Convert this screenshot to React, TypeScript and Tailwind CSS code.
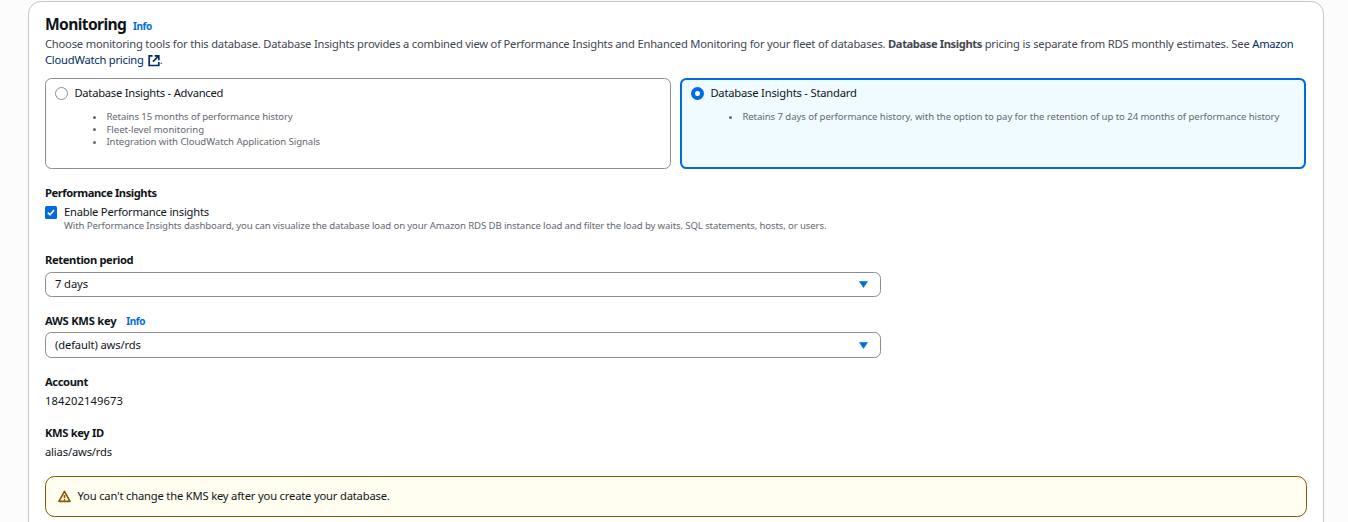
import type { ReactNode } from "react";

function Info({ className = "" }: { className?: string }) {
  return (
    <a className={`text-[10px] font-bold tracking-[-0.4px] text-[#006ce0] ${className}`} href="#info">
      Info
    </a>
  );
}

function ExternalIcon() {
  return (
    <svg
      className="ml-[4px] inline-block h-[13px] w-3 align-[-3px]"
      viewBox="0 0 12 13"
      fill="none"
      stroke="currentColor"
      strokeWidth="1.7"
    >
      <path d="M4.6 1.8H1.2v9.7h9.6V8" />
      <path d="M6.6 1.8h4.2v4.4M10.6 2 5 7.6" />
    </svg>
  );
}

function WarningIcon() {
  return (
    <svg
      className="h-[13px] w-[13px] shrink-0"
      viewBox="0 0 16 16"
      fill="none"
      stroke="#855900"
      strokeWidth="2"
      strokeLinejoin="round"
    >
      <path d="M8 1.6 1.2 14h13.6L8 1.6Z" />
      <path d="M8 6v4M8 11v2" />
    </svg>
  );
}

function Radio({ checked }: { checked: boolean }) {
  return (
    <svg className="h-[13px] w-[13px] shrink-0" viewBox="0 0 13 13">
      {checked ? (
        <circle cx="6.5" cy="6.5" r="4.5" fill="#fff" stroke="#006ce0" strokeWidth="4" />
      ) : (
        <circle cx="6.5" cy="6.5" r="6" fill="#fff" stroke="#8c8c94" strokeWidth="1" />
      )}
    </svg>
  );
}

function Tile({ title, items, checked }: { title: ReactNode; items: ReactNode[]; checked: boolean }) {
  const frame = checked
    ? "border-2 border-[#006ce0] bg-[#f0fbff] px-[9px] py-[5px]"
    : "border border-[#8c8c94] bg-white px-[9px] py-[6px]";
  return (
    <div className={`h-[91px] w-[626px] rounded-[6.4px] ${frame}`}>
      <div className="flex h-4 items-center gap-[6.4px]">
        <Radio checked={checked} />
        {title}
      </div>
      <ul className="mt-[10px] pl-[38.4px] text-[9.6px] leading-[12.5px] text-[#656871]">
        {items.map((item, i) => (
          <li key={i} className="flex items-center whitespace-nowrap">
            <span className="mr-[10px] h-[3px] w-[3px] shrink-0 rounded-full bg-[#656871]" />
            {item}
          </li>
        ))}
      </ul>
    </div>
  );
}

function Select({ children, className }: { children: ReactNode; className: string }) {
  return (
    <div
      className={`flex w-[836px] items-center justify-between rounded-[6.4px] border border-[#8c8c94] bg-white pr-3 pl-[9px] ${className}`}
    >
      {children}
      <svg className="h-[7px] w-[9px]" viewBox="0 0 9 7">
        <path d="M.5.5h8l-4 6z" fill="#006ce0" stroke="#006ce0" strokeWidth=".6" strokeLinejoin="round" />
      </svg>
    </div>
  );
}

export default function App() {
  return (
    <div className="h-[522px] overflow-hidden bg-[#fcfcfd] pt-px pl-7 font-['Noto_Sans','Open_Sans',sans-serif] text-[11.2px] leading-4 text-[#0f141a]">
      <section className="h-[560px] w-[1296px] rounded-[12.8px] border border-[#c6c6cd] bg-white pt-3 pr-[17px] pl-4">
        <header className="flex h-5 items-baseline">
          <h2 className="text-[15.6px] leading-5 font-bold tracking-[-0.62px]">Monitoring</h2>
          <Info className="ml-[6.8px]" />
        </header>
        <div className="mt-[2px] h-8 whitespace-nowrap text-[#424650]">
          <p className="tracking-[-0.21px]">
            Choose monitoring tools for this database. Database Insights provides a combined view of Performance Insights and Enhanced Monitoring for your fleet of databases.{" "}
            <b className="tracking-[-0.41px]">Database Insights</b>{" "}
            <span className="tracking-[-0.18px]">pricing is separate from RDS monthly estimates. See </span>
            <span className="tracking-[-0.3px] text-[#002b66]">Amazon</span>
          </p>
          <p>
            <span className="tracking-[-0.22px] text-[#002b66]">
              CloudWatch pricing
              <ExternalIcon />
            </span>
            .
          </p>
        </div>

        <div className="mt-[10px] flex w-[1261px] gap-[9px]">
          <Tile
            checked={false}
            title={<span className="tracking-[-0.24px]">Database Insights - Advanced</span>}
            items={[
              <span className="tracking-[-0.1px]">Retains 15 months of performance history</span>,
              <span className="tracking-[-0.04px]">Fleet-level monitoring</span>,
              <span className="tracking-[-0.07px]">Integration with CloudWatch Application Signals</span>,
            ]}
          />
          <Tile
            checked
            title={<span className="tracking-[-0.2px]">Database Insights - Standard</span>}
            items={[
              <span className="tracking-[-0.077px]">
                Retains 7 days of performance history, with the option to pay for the retention of up to 24 months of performance history
              </span>,
            ]}
          />
        </div>

        <h3 className="mt-4 font-bold tracking-[-0.44px]">Performance Insights</h3>
        <div className="mt-[3px] flex gap-[7px]">
          <svg className="mt-[2px] h-[13px] w-3" viewBox="0 0 12 13">
            <rect width="12" height="13" rx="1.6" fill="#006ce0" />
            <path d="M2.8 6.6 5 8.9l4-5" fill="none" stroke="#fff" strokeWidth="1.6" />
          </svg>
          <div>
            <p className="tracking-[-0.22px]">Enable Performance insights</p>
            <p className="h-[11px] text-[9.6px] leading-3 tracking-[-0.117px] whitespace-nowrap text-[#656871]">
              With Performance Insights dashboard, you can visualize the database load on your Amazon RDS DB instance load and filter the load by waits, SQL statements, hosts, or users.
            </p>
          </div>
        </div>

        <h3 className="mt-[21px] font-bold tracking-[-0.38px]">Retention period</h3>
        <Select className="mt-1 h-[25px]">
          <span className="-mt-px tracking-[-0.1px]">7 days</span>
        </Select>

        <div className="mt-4 flex h-4 items-baseline">
          <h3 className="font-bold tracking-[-0.25px]">AWS KMS key</h3>
          <Info className="ml-[10px]" />
        </div>
        <Select className="mt-[3px] h-[26px]">
          <span className="tracking-[-0.14px]">(default) aws/rds</span>
        </Select>

        <h3 className="mt-4 font-bold tracking-[-0.4px]">Account</h3>
        <p className="mt-[3px] tracking-[0.1px]">184202149673</p>
        <h3 className="mt-4 font-bold tracking-[-0.35px]">KMS key ID</h3>
        <p className="mt-[3px] tracking-[-0.16px]">alias/aws/rds</p>

        <div className="mt-4 flex h-[41px] w-[1262px] items-center gap-[6.5px] rounded-[9.6px] border border-[#855900] bg-[#fffef0] px-3">
          <WarningIcon />
          <span className="-mt-px tracking-[-0.18px]">You can't change the KMS key after you create your database.</span>
        </div>
      </section>
    </div>
  );
}
